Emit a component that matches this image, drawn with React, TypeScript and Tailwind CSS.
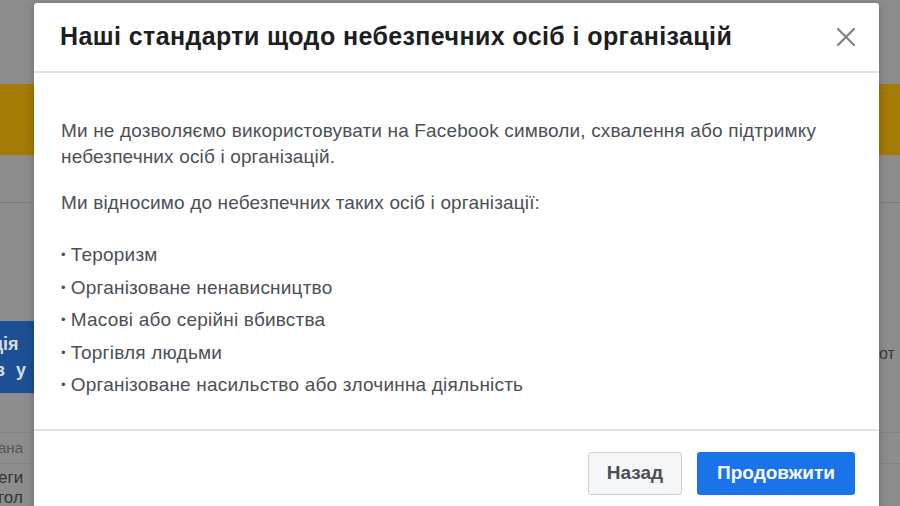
import React from 'react';

const items = [
  'Тероризм',
  'Організоване ненависництво',
  'Масові або серійні вбивства',
  'Торгівля людьми',
  'Організоване насильство або злочинна діяльність',
];

const App = () => {
  return (
    <div className="relative h-[506px] w-[900px] overflow-hidden bg-[#8d8d8d] font-['Liberation_Sans',Arial,sans-serif]">
      {/* dimmed page behind the dialog */}
      <div className="flex flex-col">
        <div className="h-[84px]" />
        <div className="h-[71px] bg-[#a37b05]" />
        <div className="h-[48px] border-b border-[#7c7c7c]" />
        <div className="h-[118px]" />
        <div className="flex h-[72px] justify-between">
          <div className="flex w-[34px] flex-col justify-center overflow-hidden bg-[#1d4f94] text-[18px] font-bold leading-[26px] text-[#d6dde8] whitespace-nowrap">
            <span className="-ml-[8px]">ція</span>
            <span className="-ml-[4px] tracking-[3px]">з у</span>
          </div>
          <div className="flex w-[21px] items-center overflow-hidden text-[16px] text-[#3a3a3a] whitespace-nowrap">
            <span className="mb-[6px]">от</span>
          </div>
        </div>
        <div className="h-[40px] border-b border-[#838383]" />
        <div className="flex h-[30px] items-center overflow-hidden whitespace-nowrap text-[15px] text-[#555]">
          <span className="-ml-[2px]">ана</span>
        </div>
        <div className="border-t border-[#838383] pt-[4px] text-[17px] leading-[20px] text-[#333] whitespace-nowrap">
          <div className="-ml-[2px]">еги</div>
          <div className="-ml-[2px]">гол</div>
        </div>
      </div>

      {/* dialog */}
      <div className="absolute left-[34px] top-[3px] h-[540px] w-[845px] rounded-[3px] bg-white shadow-[0_2px_8px_rgba(0,0,0,0.25)]">
        <div className="flex h-[70px] items-center justify-between border-b-2 border-[#e2e3e6] pl-[26px] pr-[22px]">
          <h1 className="text-[25px] font-bold tracking-[0.4px] text-[#1c1e21]">
            Наші стандарти щодо небезпечних осіб і організацій
          </h1>
          <svg width="22" height="22" viewBox="0 0 22 22" className="text-[#7d8085]">
            <path d="M3 3 L19 19 M19 3 L3 19" stroke="currentColor" strokeWidth="2.2" strokeLinecap="round" />
          </svg>
        </div>

        <div className="h-[358px] border-b-2 border-[#e2e3e6] pl-[27px] pr-[24px] pt-[45px] text-[19px] leading-[26px] tracking-[0.15px] text-[#4b4f56]">
          <p>
            Ми не дозволяємо використовувати на Facebook символи, схвалення або підтримку
            <br />
            небезпечних осіб і організацій.
          </p>
          <p className="mt-[20px]">Ми відносимо до небезпечних таких осіб і організації:</p>
          <ul className="mt-[23px] flex flex-col">
            {items.map((item) => (
              <li key={item} className="flex h-[32.5px] items-center gap-[5px] tracking-[0.2px]">
                <span className="text-[13px]">•</span>
                <span>{item}</span>
              </li>
            ))}
          </ul>
        </div>

        <div className="flex justify-end gap-[15px] pr-[24px] pt-[21px]">
          <button className="h-[43px] w-[94px] rounded-[3px] border border-[#ccd0d5] bg-[#f5f6f7] text-[19px] font-bold text-[#4b4f56]">
            Назад
          </button>
          <button className="h-[43px] w-[158px] rounded-[3px] bg-[#1a73e8] text-[19px] font-bold text-white">
            Продовжити
          </button>
        </div>
      </div>
    </div>
  );
};

export default App;
